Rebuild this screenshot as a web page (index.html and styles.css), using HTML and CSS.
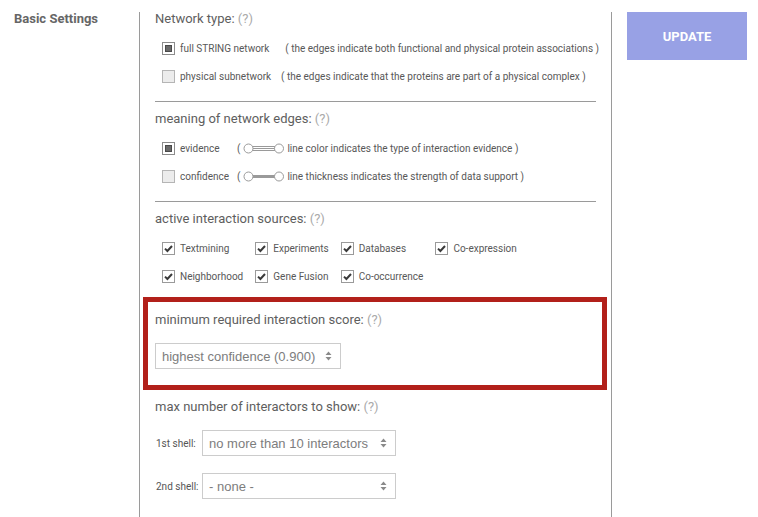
FILE: index.html
```html
<!DOCTYPE html>
<html lang="en">
<head>
<meta charset="utf-8">
<title>Basic Settings</title>
<link rel="stylesheet" href="styles.css">
</head>
<body>
<div class="page">
  <div class="side">
    <div class="side-title">Basic Settings</div>
  </div>

  <div class="settings">
    <section class="group">
      <div class="group-title">Network type: <span class="help">(?)</span></div>
      <div class="opt-row">
        <span class="box-radio checked"></span>
        <span class="opt-label">full STRING network</span>
        <span class="opt-desc wide">( the edges indicate both functional and physical protein associations )</span>
      </div>
      <div class="opt-row">
        <span class="box-radio"></span>
        <span class="opt-label">physical subnetwork</span>
        <span class="opt-desc">( the edges indicate that the proteins are part of a physical complex )</span>
      </div>
    </section>

    <section class="group">
      <div class="group-title">meaning of network edges: <span class="help">(?)</span></div>
      <div class="opt-row">
        <span class="box-radio checked"></span>
        <span class="opt-label fixed">evidence</span>
        <span class="paren">(</span>
        <svg class="edge-icon" width="42" height="11" viewBox="0 0 42 11">
          <line x1="9" y1="3.5" x2="32" y2="3.5" stroke="#9a9a9a" stroke-width="1"/>
          <line x1="9" y1="5.5" x2="32" y2="5.5" stroke="#9a9a9a" stroke-width="1"/>
          <line x1="9" y1="7.5" x2="32" y2="7.5" stroke="#9a9a9a" stroke-width="1"/>
          <circle cx="5.5" cy="5.5" r="4.5" fill="#fff" stroke="#9a9a9a" stroke-width="1"/>
          <circle cx="36" cy="5.5" r="4.5" fill="#fff" stroke="#9a9a9a" stroke-width="1"/>
        </svg>
        <span class="opt-text">line color indicates the type of interaction evidence )</span>
      </div>
      <div class="opt-row">
        <span class="box-radio"></span>
        <span class="opt-label fixed">confidence</span>
        <span class="paren">(</span>
        <svg class="edge-icon" width="42" height="11" viewBox="0 0 42 11">
          <line x1="9" y1="5.5" x2="32" y2="5.5" stroke="#9a9a9a" stroke-width="3"/>
          <circle cx="5.5" cy="5.5" r="4.5" fill="#fff" stroke="#9a9a9a" stroke-width="1"/>
          <circle cx="36" cy="5.5" r="4.5" fill="#fff" stroke="#9a9a9a" stroke-width="1"/>
        </svg>
        <span class="opt-text">line thickness indicates the strength of data support )</span>
      </div>
    </section>

    <section class="group last">
      <div class="group-title">active interaction sources: <span class="help">(?)</span></div>
      <div class="sources">
        <label class="src"><span class="check"><svg width="11" height="11" viewBox="0 0 11 11"><path d="M2 5.6 L4.4 8 L9 3" fill="none" stroke="#3a3a3a" stroke-width="2"/></svg></span>Textmining</label>
        <label class="src"><span class="check"><svg width="11" height="11" viewBox="0 0 11 11"><path d="M2 5.6 L4.4 8 L9 3" fill="none" stroke="#3a3a3a" stroke-width="2"/></svg></span>Experiments</label>
        <label class="src"><span class="check"><svg width="11" height="11" viewBox="0 0 11 11"><path d="M2 5.6 L4.4 8 L9 3" fill="none" stroke="#3a3a3a" stroke-width="2"/></svg></span>Databases</label>
        <label class="src"><span class="check"><svg width="11" height="11" viewBox="0 0 11 11"><path d="M2 5.6 L4.4 8 L9 3" fill="none" stroke="#3a3a3a" stroke-width="2"/></svg></span>Co-expression</label>
        <label class="src"><span class="check"><svg width="11" height="11" viewBox="0 0 11 11"><path d="M2 5.6 L4.4 8 L9 3" fill="none" stroke="#3a3a3a" stroke-width="2"/></svg></span>Neighborhood</label>
        <label class="src"><span class="check"><svg width="11" height="11" viewBox="0 0 11 11"><path d="M2 5.6 L4.4 8 L9 3" fill="none" stroke="#3a3a3a" stroke-width="2"/></svg></span>Gene Fusion</label>
        <label class="src"><span class="check"><svg width="11" height="11" viewBox="0 0 11 11"><path d="M2 5.6 L4.4 8 L9 3" fill="none" stroke="#3a3a3a" stroke-width="2"/></svg></span>Co-occurrence</label>
      </div>
    </section>

    <section class="score-box">
      <div class="group-title">minimum required interaction score: <span class="help">(?)</span></div>
      <div class="select-box score-select">
        <span class="select-text">highest confidence (0.900)</span>
        <svg class="select-arrows" width="7" height="10" viewBox="0 0 7 10"><path d="M3.5 0.5 L6.5 4 L0.5 4 Z M0.5 6 L6.5 6 L3.5 9.5 Z" fill="#8a8a8a"/></svg>
      </div>
    </section>

    <section class="group plain">
      <div class="group-title">max number of interactors to show: <span class="help">(?)</span></div>
      <div class="shell-row">
        <span class="shell-label">1st shell:</span>
        <div class="select-box shell-select">
          <span class="select-text">no more than 10 interactors</span>
          <svg class="select-arrows" width="7" height="10" viewBox="0 0 7 10"><path d="M3.5 0.5 L6.5 4 L0.5 4 Z M0.5 6 L6.5 6 L3.5 9.5 Z" fill="#8a8a8a"/></svg>
        </div>
      </div>
      <div class="shell-row">
        <span class="shell-label">2nd shell:</span>
        <div class="select-box shell-select">
          <span class="select-text">- none -</span>
          <svg class="select-arrows" width="7" height="10" viewBox="0 0 7 10"><path d="M3.5 0.5 L6.5 4 L0.5 4 Z M0.5 6 L6.5 6 L3.5 9.5 Z" fill="#8a8a8a"/></svg>
        </div>
      </div>
    </section>
  </div>

  <div class="actions">
    <button class="update-btn" type="button">UPDATE</button>
  </div>
</div>
</body>
</html>
```

FILE: styles.css
```css
html, body {
  margin: 0;
  padding: 0;
  background: #ffffff;
}

body {
  font-family: Roboto, "Liberation Sans", Arial, sans-serif;
  color: #555555;
}

.page {
  display: flex;
  align-items: stretch;
  height: 517px;
  padding-top: 12px;
  box-sizing: border-box;
  overflow: hidden;
}

.side {
  width: 139px;
  flex: none;
  padding-left: 14px;
  box-sizing: border-box;
}

.side-title {
  font-size: 13px;
  font-weight: 700;
  line-height: 14px;
  color: #666666;
}

.settings {
  width: 473px;
  flex: none;
  border-left: 1px solid #9a9a9a;
  border-right: 1px solid #9a9a9a;
  padding: 0 15px;
  box-sizing: border-box;
}

.group {
  padding-top: 10px;
  padding-bottom: 11px;
  border-bottom: 1px solid #9a9a9a;
}

.group:first-child {
  padding-top: 0;
}

.group.last,
.group.plain {
  border-bottom: none;
  padding-bottom: 0;
}

.group.plain {
  padding-top: 10px;
}

.group-title {
  font-size: 13px;
  line-height: 14px;
  color: #5e5e5e;
  margin-bottom: 8px;
  white-space: nowrap;
}

.help {
  color: #aaaaaa;
}

.opt-row {
  display: flex;
  align-items: center;
  height: 28px;
  padding-left: 7px;
  font-size: 10px;
  color: #585858;
  white-space: nowrap;
}

.opt-row > span {
  flex: none;
}

.box-radio {
  width: 13px;
  height: 13px;
  box-sizing: border-box;
  border: 1px solid #b5b5b5;
  background: #ececec;
  margin-right: 5px;
  display: flex;
  align-items: center;
  justify-content: center;
}

.box-radio.checked {
  background: #ffffff;
  border-color: #8c8c8c;
}

.box-radio.checked::after {
  content: "";
  width: 7px;
  height: 7px;
  box-sizing: border-box;
  background: #6a6a6a;
  border: 1px solid #4a4a4a;
}

.opt-label.fixed {
  width: 57px;
}

.opt-desc {
  margin-left: 10px;
}

.opt-desc.wide {
  margin-left: 16px;
}

.paren {
  margin-right: 3px;
}

.edge-icon {
  flex: none;
  margin-right: 2px;
}

.sources {
  display: grid;
  grid-template-columns: repeat(4, auto);
  justify-content: start;
  column-gap: 12px;
  padding-left: 7px;
  font-size: 10px;
  color: #585858;
  white-space: nowrap;
}

.src {
  display: flex;
  align-items: center;
  height: 28px;
}

.check {
  width: 13px;
  height: 13px;
  box-sizing: border-box;
  border: 1px solid #9a9a9a;
  background: #ffffff;
  margin-right: 5px;
  display: flex;
  align-items: center;
  justify-content: center;
  flex: none;
}

.score-box {
  margin: 7px -11px 0 -12px;
  border: 5px solid #b2201a;
  padding: 11px 7px 16px 7px;
}

.score-box .group-title {
  margin-bottom: 16px;
}

.select-box {
  display: flex;
  align-items: center;
  justify-content: space-between;
  height: 26px;
  box-sizing: border-box;
  border: 1px solid #cccccc;
  background: #ffffff;
  padding: 0 8px 0 6px;
  font-family: "Liberation Sans", Arial, sans-serif;
  font-size: 13px;
  color: #7d7d7d;
  white-space: nowrap;
}

.score-select {
  width: 186px;
}

.shell-select {
  width: 194px;
}

.select-arrows {
  flex: none;
}

.plain .group-title {
  margin-bottom: 16px;
}

.shell-row {
  display: flex;
  align-items: center;
  margin-bottom: 17px;
}

.shell-label {
  width: 47px;
  padding-left: 1px;
  box-sizing: border-box;
  font-size: 10px;
  color: #555555;
  white-space: nowrap;
}

.actions {
  padding-left: 15px;
}

.update-btn {
  width: 120px;
  height: 48px;
  border: none;
  background: #98a1e5;
  color: #ffffff;
  font-family: Roboto, "Liberation Sans", Arial, sans-serif;
  font-size: 13px;
  font-weight: 700;
  padding: 0;
  cursor: pointer;
}
```
